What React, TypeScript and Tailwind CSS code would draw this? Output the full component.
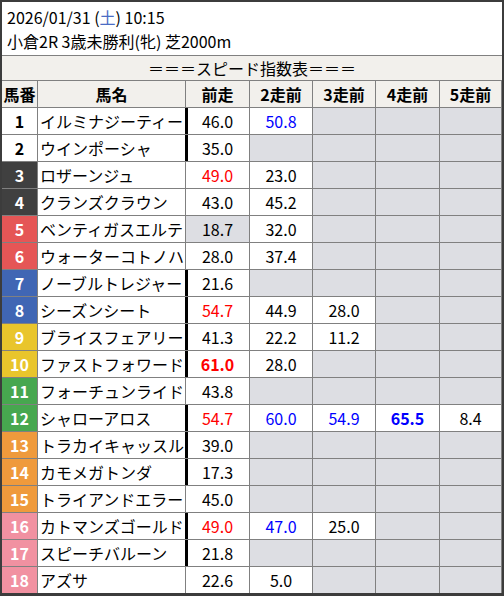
import React from 'react';

type Val = { t: string; c?: 'r' | 'b' | 'rb' | 'bb'; g?: boolean };

interface Row {
  n: number;
  name: string;
  v: Val[];
  thick?: boolean;
}

const rows: Row[] = [
  { n: 1, name: 'イルミナジーティー', v: [{ t: '46.0' }, { t: '50.8', c: 'b' }], thick: true },
  { n: 2, name: 'ウインポーシャ', v: [{ t: '35.0' }], thick: true },
  { n: 3, name: 'ロザーンジュ', v: [{ t: '49.0', c: 'r' }, { t: '23.0' }] },
  { n: 4, name: 'クランズクラウン', v: [{ t: '43.0' }, { t: '45.2' }] },
  { n: 5, name: 'ベンティガスエルテ', v: [{ t: '18.7', g: true }, { t: '32.0' }] },
  { n: 6, name: 'ウォーターコトノハ', v: [{ t: '28.0' }, { t: '37.4' }] },
  { n: 7, name: 'ノーブルトレジャー', v: [{ t: '21.6' }], thick: true },
  { n: 8, name: 'シーズンシート', v: [{ t: '54.7', c: 'r' }, { t: '44.9' }, { t: '28.0' }], thick: true },
  { n: 9, name: 'ブライスフェアリー', v: [{ t: '41.3' }, { t: '22.2' }, { t: '11.2' }], thick: true },
  { n: 10, name: 'ファストフォワード', v: [{ t: '61.0', c: 'rb' }, { t: '28.0' }], thick: true },
  { n: 11, name: 'フォーチュンライド', v: [{ t: '43.8' }] },
  {
    n: 12,
    name: 'シャローアロス',
    v: [{ t: '54.7', c: 'r' }, { t: '60.0', c: 'b' }, { t: '54.9', c: 'b' }, { t: '65.5', c: 'bb' }, { t: '8.4' }],
    thick: true,
  },
  { n: 13, name: 'トラカイキャッスル', v: [{ t: '39.0' }], thick: true },
  { n: 14, name: 'カモメガトンダ', v: [{ t: '17.3' }], thick: true },
  { n: 15, name: 'トライアンドエラー', v: [{ t: '45.0' }] },
  { n: 16, name: 'カトマンズゴールド', v: [{ t: '49.0', c: 'r' }, { t: '47.0', c: 'b' }, { t: '25.0' }], thick: true },
  { n: 17, name: 'スピーチバルーン', v: [{ t: '21.8' }], thick: true },
  { n: 18, name: 'アズサ', v: [{ t: '22.6' }, { t: '5.0' }] },
];

const frameClass = (n: number) => {
  if (n <= 2) return 'bg-white text-black';
  if (n <= 4) return 'bg-[#404040] text-white';
  if (n <= 6) return 'bg-[#e55656] text-white';
  if (n <= 8) return 'bg-[#4066b4] text-white';
  if (n <= 10) return 'bg-[#e9c52c] text-white';
  if (n <= 12) return 'bg-[#47a74f] text-white';
  if (n <= 15) return 'bg-[#ef9a3c] text-white';
  return 'bg-[#f191a1] text-white';
};

const valClass = (c?: Val['c']) => {
  switch (c) {
    case 'r':
      return 'text-[#ff0000]';
    case 'b':
      return 'text-[#0000ff]';
    case 'rb':
      return 'text-[#ff0000] font-bold';
    case 'bb':
      return 'text-[#0000ff] font-bold';
    default:
      return 'text-black';
  }
};

const heads = ['馬番', '馬名', '前走', '2走前', '3走前', '4走前', '5走前'];

export default function App() {
  return (
    <div
      className="w-[504px] h-[596px] bg-[#3c3c3c] pl-[2px] pr-[2px] pt-[2px] pb-[3px]"
      style={{ fontFamily: '"Noto Sans CJK JP", "Noto Sans", sans-serif' }}
    >
      <div className="w-[500px] h-[591px] flex flex-col bg-[#808080] gap-px">
        {/* race info */}
        <div className="h-[53px] bg-white pl-[5px] pt-[3px] text-[16px] leading-[24px] text-black">
          <div>
            2026/01/31 (<span className="text-[#4a6cc4]">土</span>) 10:15
          </div>
          <div>小倉2R 3歳未勝利(牝) 芝2000m</div>
        </div>

        <div className="h-[24px] bg-[#f2f0ec] flex items-center justify-center text-[16px] text-black">
          ＝＝＝スピード指数表＝＝＝
        </div>

        <div className="grid grid-cols-[35px_147px_63px_62px_62px_63px_61px] grid-rows-[26px] auto-rows-[26px] gap-px">
          {heads.map((h) => (
            <div key={h} className="bg-[#f2f0ec] flex items-center justify-center text-[16px] font-bold text-black">
              {h}
            </div>
          ))}

          {rows.map((r) => (
            <React.Fragment key={r.n}>
              <div className={`flex items-center justify-center text-[16px] font-bold ${frameClass(r.n)}`}>{r.n}</div>
              <div className="bg-white flex items-center pl-[2px] text-[16px] text-black whitespace-nowrap overflow-hidden">
                {r.name}
              </div>
              {[0, 1, 2, 3, 4].map((i) => {
                const v = r.v[i];
                const grey = !v || v.g;
                const thick = i === 0 && r.thick ? 'shadow-[inset_2px_0_0_#000,-1px_0_0_#000]' : '';
                return (
                  <div
                    key={i}
                    className={`flex items-center justify-center text-[16px] ${grey ? 'bg-[#dddee3]' : 'bg-white'} ${
                      v ? valClass(v.c) : ''
                    } ${thick}`}
                  >
                    {v ? v.t : ''}
                  </div>
                );
              })}
            </React.Fragment>
          ))}
        </div>
      </div>
    </div>
  );
}
